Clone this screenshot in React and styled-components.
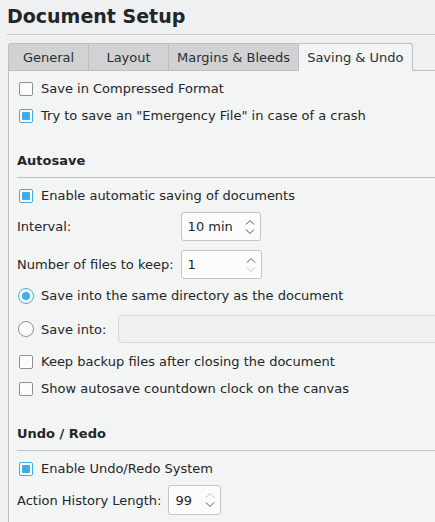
import React from 'react';
import styled, { createGlobalStyle, css } from 'styled-components';

const Global = createGlobalStyle`
  html, body { margin: 0; padding: 0; background: #eff0f1; overflow: hidden; }
  body { font-family: "DejaVu Sans", "Noto Sans", sans-serif; font-size: 13px; color: #232629; }
  * { box-sizing: border-box; }
`;

const Page = styled.div`
  width: 435px;
  height: 522px;
  overflow: hidden;
  padding-left: 7px;
  display: flex;
  flex-direction: column;
`;

const Title = styled.h1`
  margin: 0;
  height: 35px;
  padding-top: 4px;
  font-size: 19px;
  line-height: 24px;
  font-weight: bold;
  border-bottom: 1px solid #c6c8ca;
  white-space: nowrap;
`;

const TabBar = styled.div`
  display: flex;
  align-items: flex-end;
  margin-top: 8px;
  margin-left: 1px;
  height: 28px;
`;

const Tab = styled.div`
  height: 28px;
  min-width: 80px;
  padding: 0 8px;
  display: flex;
  align-items: center;
  justify-content: center;
  white-space: nowrap;
  border: 1px solid #bcbec0;
  border-right: none;
  background: #d1d2d3;
  color: #2b2e31;
  &:first-child { border-top-left-radius: 3px; }
  ${(p) =>
    p.$active &&
    css`
      background: #f3f4f4;
      border-right: 1px solid #bcbec0;
      border-bottom-color: #f3f4f4;
      border-top-left-radius: 3px;
      border-top-right-radius: 3px;
    `}
`;

const TabFill = styled.div`
  flex: 1;
  border-bottom: 1px solid #bcbec0;
  align-self: stretch;
`;

const Panel = styled.div`
  flex: 1;
  margin-left: 1px;
  width: 470px;
  border-left: 1px solid #bcbec0;
  background: #f3f4f4;
  padding: 4px 0 0 8px;
  display: flex;
  flex-direction: column;
`;

const Row = styled.div`
  display: flex;
  align-items: center;
  height: ${(p) => p.$h || 27}px;
  margin-top: ${(p) => p.$mt || 0}px;
  white-space: nowrap;
`;

const GroupHeader = styled.div`
  margin-top: ${(p) => p.$mt || 0}px;
  height: 30px;
  line-height: 26px;
  padding-bottom: 3px;
  font-weight: bold;
  border-bottom: 1px solid #c0c2c4;
`;

const Box = styled.span`
  flex: none;
  width: 14px;
  height: 14px;
  margin: 0 8px 0 2px;
  border: 1px solid ${(p) => (p.$on ? '#3daee9' : '#8d8f91')};
  border-radius: 2px;
  background: #fcfcfc;
  padding: 2px;
  display: flex;
  &::after {
    content: '';
    flex: 1;
    border-radius: 1px;
    background: ${(p) => (p.$on ? '#3daee9' : 'transparent')};
  }
`;

const Radio = styled.span`
  flex: none;
  width: 16px;
  height: 16px;
  margin: 0 7px 0 1px;
  border: 1px solid ${(p) => (p.$on ? '#3daee9' : '#8d8f91')};
  border-radius: 50%;
  background: #fcfcfc;
  padding: 3px;
  display: flex;
  &::after {
    content: '';
    flex: 1;
    border-radius: 50%;
    background: ${(p) => (p.$on ? '#3daee9' : 'transparent')};
  }
`;

const SpinGrid = styled.div`
  display: grid;
  grid-template-columns: auto auto;
  justify-content: start;
  align-items: center;
  column-gap: 7px;
  row-gap: 9px;
  margin-top: ${(p) => p.$mt || 0}px;
`;

const Label = styled.span`
  white-space: nowrap;
`;

const Spin = styled.div`
  width: ${(p) => p.$w}px;
  height: ${(p) => p.$h || 29}px;
  border: 1px solid #c2c4c6;
  border-radius: 3px;
  background: #fcfcfc;
  display: flex;
  align-items: center;
  padding: 0 5px 0 6px;
`;

const SpinText = styled.span`
  flex: 1;
  white-space: nowrap;
`;

const Arrows = styled.span`
  display: flex;
  flex-direction: column;
  gap: 4px;
`;

const Chevron = ({ up, off }) => (
  <svg width="10" height="6" viewBox="0 0 10 6">
    <path
      d={up ? 'M1 5.5 L5 1.5 L9 5.5' : 'M1 0.5 L5 4.5 L9 0.5'}
      fill="none"
      stroke={off ? '#b9bbbd' : '#4d5053'}
      strokeWidth="1"
    />
  </svg>
);

const SpinBox = ({ value, w, h, upOff, downOff }) => (
  <Spin $w={w} $h={h}>
    <SpinText>{value}</SpinText>
    <Arrows>
      <Chevron up off={upOff} />
      <Chevron off={downOff} />
    </Arrows>
  </Spin>
);

const PathInput = styled.div`
  flex: 1;
  height: 28px;
  margin-left: 12px;
  border: 1px solid #d6d8da;
  border-radius: 3px;
  background: #eff0f1;
`;

const Check = ({ on, children, mt }) => (
  <Row $mt={mt}>
    <Box $on={on} />
    <Label>{children}</Label>
  </Row>
);

export default function App() {
  return (
    <>
      <Global />
      <Page>
        <Title>Document Setup</Title>
        <TabBar>
          <Tab>General</Tab>
          <Tab>Layout</Tab>
          <Tab>Margins &amp; Bleeds</Tab>
          <Tab $active>Saving &amp; Undo</Tab>
          <TabFill />
        </TabBar>
        <Panel>
          <Check>Save in Compressed Format</Check>
          <Check on>Try to save an "Emergency File" in case of a crash</Check>

          <GroupHeader $mt={19}>Autosave</GroupHeader>
          <Check on mt={4}>Enable automatic saving of documents</Check>
          <SpinGrid $mt={3}>
            <Label>Interval:</Label>
            <SpinBox value="10 min" w={80} />
            <Label>Number of files to keep:</Label>
            <SpinBox value="1" w={81} downOff />
          </SpinGrid>
          <Row $mt={3}>
            <Radio $on />
            <Label>Save into the same directory as the document</Label>
          </Row>
          <Row $mt={6} $h={28}>
            <Radio />
            <Label>Save into:</Label>
            <PathInput />
          </Row>
          <Check mt={5}>Keep backup files after closing the document</Check>
          <Check>Show autosave countdown clock on the canvas</Check>

          <GroupHeader $mt={19}>Undo / Redo</GroupHeader>
          <Check on mt={4}>Enable Undo/Redo System</Check>
          <SpinGrid $mt={3}>
            <Label>Action History Length:</Label>
            <SpinBox value="99" w={53} h={30} upOff />
          </SpinGrid>
        </Panel>
      </Page>
    </>
  );
}
